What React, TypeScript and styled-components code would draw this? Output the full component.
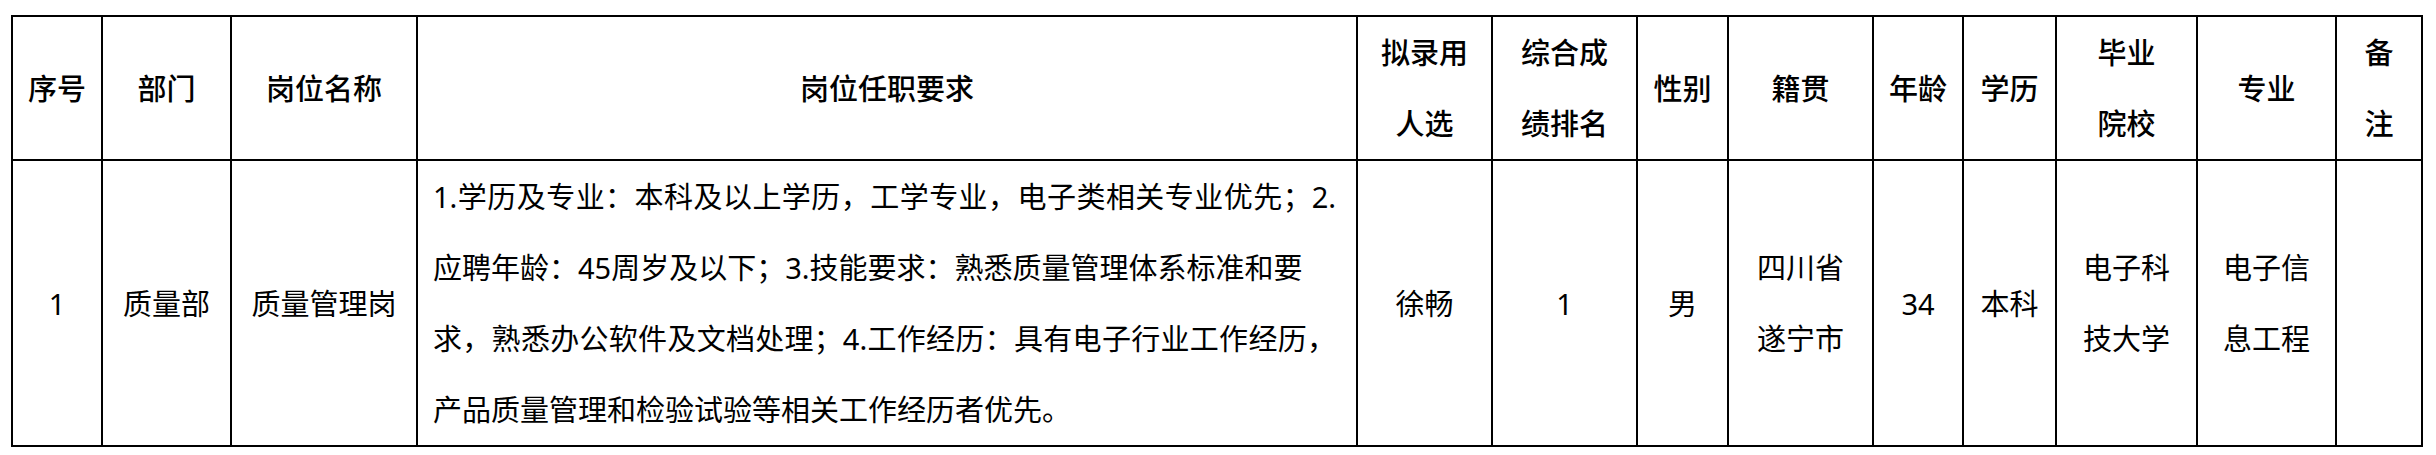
import React from 'react';
import styled, { createGlobalStyle } from 'styled-components';

const GlobalStyle = createGlobalStyle`
  html, body {
    margin: 0;
    padding: 0;
    background: #ffffff;
  }
`;

const Page = styled.div`
  padding: 15px 0 0 11px;
  font-family: "Noto Sans", "Noto Sans CJK SC", sans-serif;
  color: #000;
`;

const Table = styled.table`
  border-collapse: collapse;
  table-layout: fixed;
  width: 2410px;
`;

const HeadRow = styled.tr`
  height: 142px;
`;

const BodyRow = styled.tr`
  height: 286px;
`;

const Cell = styled.td<{ $align?: 'left' | 'center'; $head?: boolean }>`
  border: 2px solid #000;
  padding: ${(p) => (p.$align === 'left' ? '0 20px 0 15px' : '0 4px')};
  vertical-align: middle;
  text-align: ${(p) => p.$align || 'center'};
  font-size: 29px;
  line-height: 71px;
  font-weight: ${(p) => (p.$head ? 500 : 400)};
  white-space: nowrap;
`;

const Line = styled.div<{ $spread?: boolean }>`
  text-align: inherit;
  text-align-last: ${(p) => (p.$spread ? 'justify' : 'auto')};
`;

interface Column {
  width: number;
  head: string[];
}

const columns: Column[] = [
  { width: 90, head: ['序号'] },
  { width: 129, head: ['部门'] },
  { width: 186, head: ['岗位名称'] },
  { width: 940, head: ['岗位任职要求'] },
  { width: 135, head: ['拟录用', '人选'] },
  { width: 145, head: ['综合成', '绩排名'] },
  { width: 91, head: ['性别'] },
  { width: 145, head: ['籍贯'] },
  { width: 90, head: ['年龄'] },
  { width: 93, head: ['学历'] },
  { width: 141, head: ['毕业', '院校'] },
  { width: 139, head: ['专业'] },
  { width: 86, head: ['备', '注'] },
];

// lines of the requirement text, the ones that run to the right edge are spread
const requirements = [
  { text: '1.学历及专业：本科及以上学历，工学专业，电子类相关专业优先；2.', spread: true },
  { text: '应聘年龄：45周岁及以下；3.技能要求：熟悉质量管理体系标准和要', spread: false },
  { text: '求，熟悉办公软件及文档处理；4.工作经历：具有电子行业工作经历，', spread: true },
  { text: '产品质量管理和检验试验等相关工作经历者优先。', spread: false },
];

const row: string[][] = [
  ['1'],
  ['质量部'],
  ['质量管理岗'],
  [],
  ['徐畅'],
  ['1'],
  ['男'],
  ['四川省', '遂宁市'],
  ['34'],
  ['本科'],
  ['电子科', '技大学'],
  ['电子信', '息工程'],
  [],
];

const App: React.FC = () => {
  return (
    <>
      <GlobalStyle />
      <Page>
        <Table>
          <colgroup>
            {columns.map((c, i) => (
              <col key={i} style={{ width: c.width }} />
            ))}
          </colgroup>
          <thead>
            <HeadRow>
              {columns.map((c, i) => (
                <Cell as="th" key={i} $head>
                  {c.head.map((t) => (
                    <Line key={t}>{t}</Line>
                  ))}
                </Cell>
              ))}
            </HeadRow>
          </thead>
          <tbody>
            <BodyRow>
              {row.map((lines, i) =>
                i === 3 ? (
                  <Cell key={i} $align="left">
                    {requirements.map((r) => (
                      <Line key={r.text} $spread={r.spread}>
                        {r.text}
                      </Line>
                    ))}
                  </Cell>
                ) : (
                  <Cell key={i}>
                    {lines.map((t) => (
                      <Line key={t}>{t}</Line>
                    ))}
                  </Cell>
                )
              )}
            </BodyRow>
          </tbody>
        </Table>
      </Page>
    </>
  );
};

export default App;
